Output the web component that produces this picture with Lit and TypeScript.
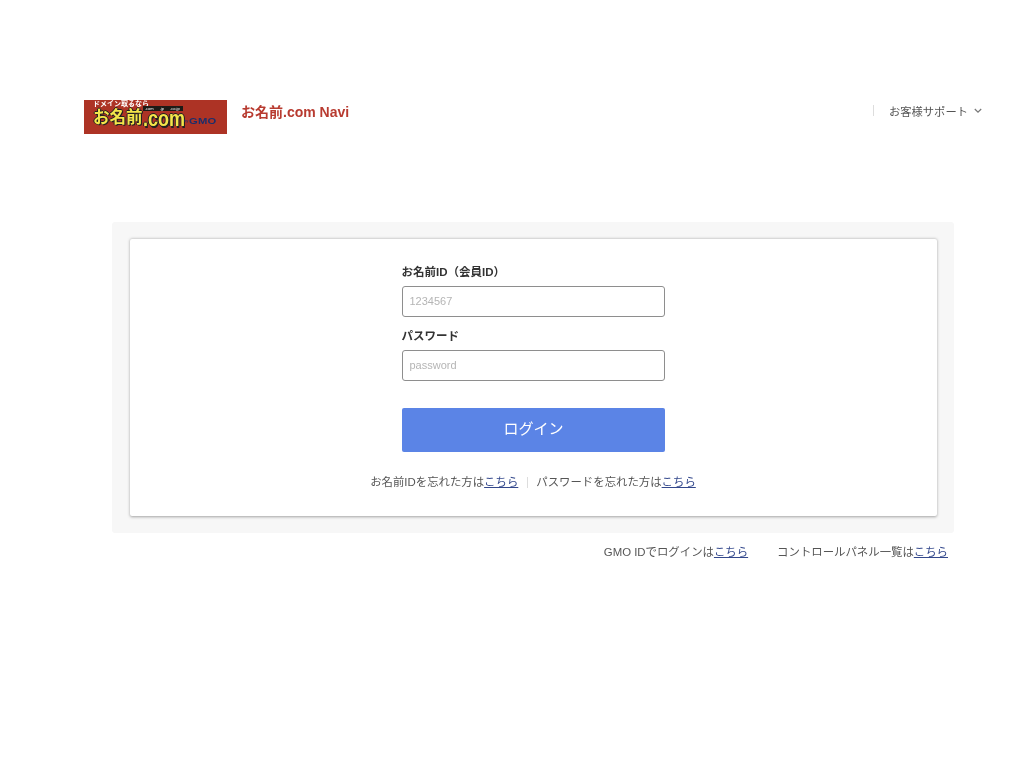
import { LitElement, html, css } from "lit";
import { customElement } from "lit/decorators.js";

@customElement("app-root")
export class AppRoot extends LitElement {
  static styles = css`
    :host {
      display: block;
      height: 768px;
      background: #fff;
      color: #444;
      font-family: "Liberation Sans", "Noto Sans CJK JP", sans-serif;
      font-size: 11.4px;
      filter: blur(0.35px);
    }
    .header {
      display: flex;
      align-items: center;
      padding: 100px 42px 0 84px;
      height: 34px;
    }
    .logo {
      width: 143px;
      height: 34px;
      background: #ad3325;
      position: relative;
      flex: none;
      overflow: hidden;
    }
    .logo-top {
      position: absolute;
      left: 9px;
      top: 0;
      font-size: 7px;
      line-height: 7px;
      font-weight: 700;
      color: #fff;
      white-space: nowrap;
    }
    .logo-name {
      position: absolute;
      left: 9px;
      top: 7px;
      font-size: 16.5px;
      line-height: 20px;
      font-weight: 700;
      color: #f5e54a;
      white-space: nowrap;
      text-shadow: 1px 1px 0 #222, -1px 0 0 #222, 0 -1px 0 #222, 1px 0 0 #222;
    }
    .logo-com {
      position: absolute;
      left: 59px;
      top: 12px;
      font-size: 18px;
      line-height: 13px;
      font-weight: 700;
      color: #f5e54a;
      white-space: nowrap;
      transform: scaleY(1.2);
      transform-origin: left top;
      text-shadow: 1px 1px 0 #222, -1px 0 0 #222, 0 -1px 0 #222, 1px 0 0 #222;
    }
    .logo-tld {
      position: absolute;
      left: 59px;
      top: 6px;
      width: 40px;
      box-sizing: border-box;
      background: #1d1a16;
      color: #fff;
      font-size: 4px;
      line-height: 5px;
      padding: 0 2px;
      white-space: nowrap;
      word-spacing: 5px;
    }
    .logo-by {
      position: absolute;
      left: 100px;
      top: 17px;
      font-size: 4px;
      line-height: 8px;
      color: #1c2f6b;
      white-space: nowrap;
    }
    .logo-gmo {
      position: absolute;
      left: 105px;
      top: 16px;
      font-size: 9px;
      line-height: 10px;
      font-weight: 700;
      color: #1c2f6b;
      white-space: nowrap;
      letter-spacing: 0.2px;
      transform: scaleX(1.25);
      transform-origin: left center;
    }
    .brand {
      margin-left: 14px;
      margin-top: -13px;
      font-size: 14px;
      font-weight: 700;
      color: #b83b30;
      white-space: nowrap;
    }
    .support {
      margin-left: auto;
      margin-top: -13px;
      display: flex;
      align-items: center;
      color: #555;
      font-size: 11.3px;
      white-space: nowrap;
    }
    .support .sep {
      width: 1px;
      height: 11px;
      background: #ddd;
      margin-right: 15px;
    }
    .support svg { margin-left: 6px; }
    .panel {
      margin: 88px 70px 0 112px;
      padding: 17px 17px 17px 18px;
      background: #f7f7f7;
      border-radius: 3px;
    }
    .card {
      height: 277px;
      box-sizing: border-box;
      background: #fff;
      box-shadow: 0 0.5px 3px rgba(0, 0, 0, 0.35);
      border-radius: 2px;
      display: flex;
      flex-direction: column;
      align-items: center;
      padding-top: 25px;
      padding-right: 1px;
    }
    .form { width: 263px; }
    label {
      display: block;
      font-size: 11.5px;
      line-height: 16px;
      font-weight: 700;
      color: #333;
      margin-bottom: 6px;
    }
    input {
      display: block;
      box-sizing: border-box;
      width: 263px;
      height: 31px;
      border: 1px solid #8e8e8e;
      border-radius: 3px;
      padding: 0 7px 2px;
      font: inherit;
      font-size: 11px;
      background: #fff;
      margin-bottom: 11px;
      outline: none;
    }
    input::placeholder { color: #b5b5b5; opacity: 1; }
    button {
      display: block;
      width: 263px;
      height: 44px;
      margin-top: 27px;
      padding: 0 0 5px 1px;
      border: none;
      border-radius: 2px;
      background: #5b84e6;
      color: #fff;
      font: inherit;
      font-size: 15px;
    }
    a { color: #33488c; text-decoration: underline; }
    .links {
      display: flex;
      align-items: center;
      margin-top: 22px;
      line-height: 16px;
      white-space: nowrap;
      color: #555;
    }
    .links .sep {
      width: 1px;
      height: 11px;
      background: #ddd;
      margin: 0 8.5px;
    }
    .foot {
      display: flex;
      justify-content: flex-end;
      gap: 29px;
      margin: 11px 76px 0 0;
      line-height: 16px;
      white-space: nowrap;
      color: #555;
    }
  `;

  render() {
    return html`
      <div class="header">
        <div class="logo">
          <span class="logo-top">ドメイン取るなら</span>
          <span class="logo-name">お名前</span>
          <span class="logo-tld">.com .jp .co.jp</span>
          <span class="logo-com">.com</span>
          <span class="logo-by">by</span>
          <span class="logo-gmo">GMO</span>
        </div>
        <div class="brand">お名前.com Navi</div>
        <div class="support">
          <span class="sep"></span>お客様サポート
          <svg width="8" height="6" viewBox="0 0 8 6" fill="none" stroke="#777" stroke-width="1.2"><path d="M.8 1l3.2 3.2L7.2 1" /></svg>
        </div>
      </div>
      <div class="panel">
        <div class="card">
          <div class="form">
            <label>お名前ID（会員ID）</label>
            <input placeholder="1234567" />
            <label>パスワード</label>
            <input placeholder="password" />
            <button>ログイン</button>
          </div>
          <div class="links">
            お名前IDを忘れた方は<a href="#">こちら</a>
            <span class="sep"></span>
            パスワードを忘れた方は<a href="#">こちら</a>
          </div>
        </div>
      </div>
      <div class="foot">
        <span>GMO IDでログインは<a href="#">こちら</a></span>
        <span>コントロールパネル一覧は<a href="#">こちら</a></span>
      </div>
    `;
  }
}
